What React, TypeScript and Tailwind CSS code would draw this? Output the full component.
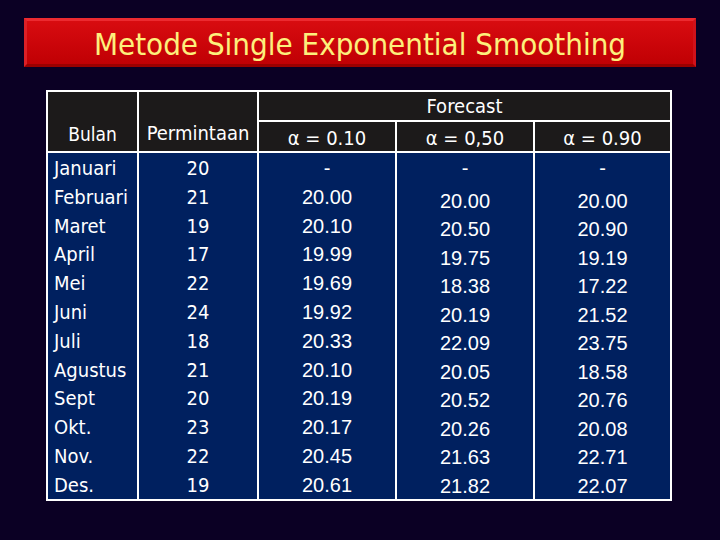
const tahoma = "font-['DejaVu_Sans_Condensed','DejaVu_Sans',sans-serif]";
const arial = "font-['Liberation_Sans',Arial,sans-serif]";

const months = ["Januari", "Februari", "Maret", "April", "Mei", "Juni", "Juli", "Agustus", "Sept", "Okt.", "Nov.", "Des."];
const demand = ["20", "21", "19", "17", "22", "24", "18", "21", "20", "23", "22", "19"];
const f10 = ["20.00", "20.10", "19.99", "19.69", "19.92", "20.33", "20.10", "20.19", "20.17", "20.45", "20.61"];
const f50 = ["20.00", "20.50", "19.75", "18.38", "20.19", "22.09", "20.05", "20.52", "20.26", "21.63", "21.82"];
const f90 = ["20.00", "20.90", "19.19", "17.22", "21.52", "23.75", "18.58", "20.76", "20.08", "22.71", "22.07"];

function ForecastCol({ values, shifted }: { values: string[]; shifted?: boolean }) {
  return (
    <div className={`flex flex-col items-center bg-[#00205f] pt-[1px] text-[20px] text-white ${arial}`}>
      <div className="h-[28.8px] leading-[28.8px]">-</div>
      <div className={`flex flex-col items-center ${shifted ? "mt-[4px]" : ""}`}>
        {values.map((v, i) => (
          <div key={i} className={shifted ? "h-[28.5px] leading-[28.5px]" : "h-[28.8px] leading-[28.8px]"}>
            {v}
          </div>
        ))}
      </div>
    </div>
  );
}

export default function App() {
  return (
    <div className="h-[540px] w-[720px] overflow-hidden bg-[#0b0024] pt-[18px]">
      <div className="ml-[24px] flex h-[49px] w-[672px] items-center justify-center border-t-[3px] border-r-[3px] border-b-[3px] border-l-[3px] border-t-[#ec2a30] border-r-[#d0121a] border-b-[#9a0000] border-l-[#dc2026] bg-linear-to-b from-[#d80c10] to-[#c00004]">
        <h1 className={`pt-[3px] text-[31px] leading-none text-[#fdf07c] ${tahoma}`}>Metode Single Exponential Smoothing</h1>
      </div>

      <div className="ml-[46px] mt-[23px] grid w-[626px] grid-cols-[89px_118px_136px_136px_135px] grid-rows-[28px_29px_346px] gap-[2px] bg-white p-[2px]">
        <div className={`row-span-2 flex items-end justify-center bg-[#1c1a1a] pb-[3px] text-[19px] text-white ${tahoma}`}>Bulan</div>
        <div className={`row-span-2 flex items-end justify-center bg-[#1c1a1a] pb-[3px] text-[20px] text-white ${tahoma}`}>Permintaan</div>
        <div className={`col-span-3 flex items-center justify-center bg-[#1c1a1a] text-[20px] text-white ${tahoma}`}>Forecast</div>
        <div className={`flex items-center justify-center bg-[#1c1a1a] pt-[2px] text-[20px] text-white ${tahoma}`}>α = 0.10</div>
        <div className={`flex items-center justify-center bg-[#1c1a1a] pt-[2px] text-[20px] text-white ${tahoma}`}>α = 0,50</div>
        <div className={`flex items-center justify-center bg-[#1c1a1a] pt-[2px] text-[20px] text-white ${tahoma}`}>α = 0.90</div>

        <div className={`flex flex-col bg-[#00205f] pl-[6px] pt-[1px] text-[20px] text-white ${tahoma}`}>
          {months.map((m) => (
            <div key={m} className="h-[28.8px] leading-[28.8px]">{m}</div>
          ))}
        </div>
        <div className={`flex flex-col items-center bg-[#00205f] pt-[1px] text-[20px] text-white ${tahoma}`}>
          {demand.map((d, i) => (
            <div key={i} className="h-[28.8px] leading-[28.8px]">{d}</div>
          ))}
        </div>
        <ForecastCol values={f10} />
        <ForecastCol values={f50} shifted />
        <ForecastCol values={f90} shifted />
      </div>
    </div>
  );
}
